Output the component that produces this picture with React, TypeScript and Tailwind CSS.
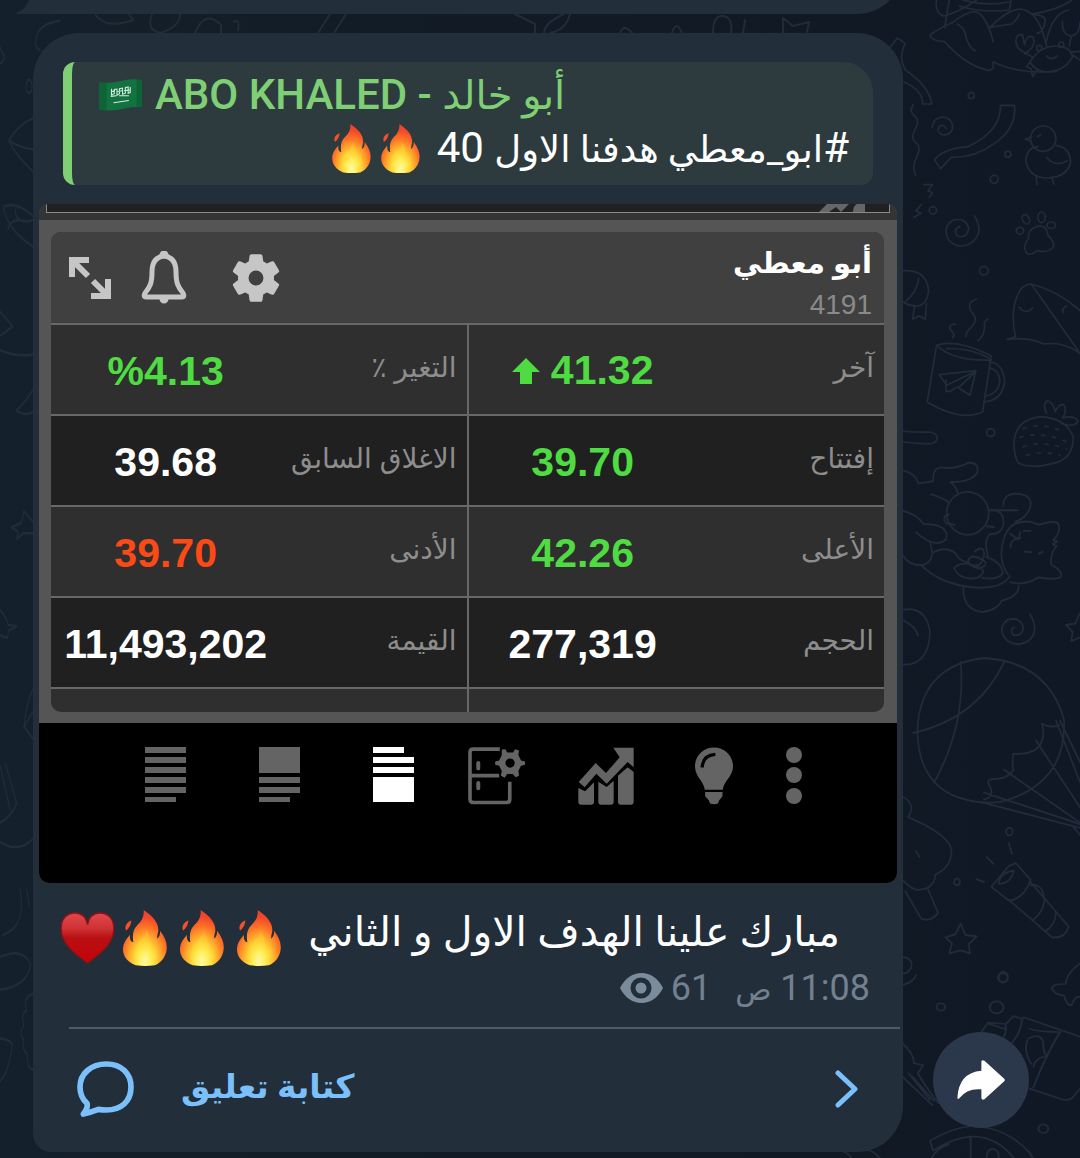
import React from 'react';

type Tone = 'up' | 'down' | 'flat';

interface Quote {
  label: string;
  value: string;
  tone: Tone;
  arrow?: boolean;
}

const quoteRows: [Quote, Quote][] = [
  [
    { label: 'آخر', value: '41.32', tone: 'up', arrow: true },
    { label: 'التغير ٪', value: '%4.13', tone: 'up' },
  ],
  [
    { label: 'إفتتاح', value: '39.70', tone: 'up' },
    { label: 'الاغلاق السابق', value: '39.68', tone: 'flat' },
  ],
  [
    { label: 'الأعلى', value: '42.26', tone: 'up' },
    { label: 'الأدنى', value: '39.70', tone: 'down' },
  ],
  [
    { label: 'الحجم', value: '277,319', tone: 'flat' },
    { label: 'القيمة', value: '11,493,202', tone: 'flat' },
  ],
];

const toneClass: Record<Tone, string> = {
  up: 'text-[#4fdc43]',
  down: 'text-[#fc4a17]',
  flat: 'text-white',
};

const GEAR =
  'M19.14 12.94c.04-.3.06-.61.06-.94 0-.32-.02-.64-.07-.94l2.03-1.58c.18-.14.23-.41.12-.61l-1.92-3.32c-.12-.22-.37-.29-.59-.22l-2.39.96c-.5-.38-1.03-.7-1.62-.94l-.36-2.54c-.04-.24-.24-.41-.48-.41h-3.84c-.24 0-.43.17-.47.41l-.36 2.54c-.59.24-1.13.57-1.62.94l-2.39-.96c-.22-.08-.47 0-.59.22L2.74 8.87c-.12.21-.08.47.12.61l2.03 1.58c-.05.3-.09.63-.09.94s.02.64.07.94l-2.03 1.58c-.18.14-.23.41-.12.61l1.92 3.32c.12.22.37.29.59.22l2.39-.96c.5.38 1.03.7 1.62.94l.36 2.54c.05.24.24.41.48.41h3.84c.24 0 .44-.17.47-.41l.36-2.54c.59-.24 1.13-.56 1.62-.94l2.39.96c.22.08.47 0 .59-.22l1.92-3.32c.12-.22.07-.47-.12-.61l-2.01-1.58zM12 15.4c-1.88 0-3.4-1.52-3.4-3.4s1.52-3.4 3.4-3.4 3.4 1.52 3.4 3.4-1.52 3.4-3.4 3.4z';

const Wallpaper: React.FC = () => (
  <svg
    className="absolute inset-0 h-full w-full"
    viewBox="0 0 1080 1158"
    preserveAspectRatio="xMidYMid slice"
    fill="none"
    stroke="#212c3a"
    strokeWidth="2"
    strokeLinecap="round"
    strokeLinejoin="round"
    aria-hidden="true"
  >
    {/* right side, upper half */}
    <g transform="scale(.3333) translate(2640 0)" strokeWidth="5">
      <path d="M170 0q-6 36 20 48q40-8 100-48M208 0l-14 84M238 18q70 22 150 12l6-30M248 0q70 20 140 6M576 0q-40 30-120 42M566 30q-50 10-68 100" />
      <path d="M150 105q34-24 66-36q60-48 84-28q26 26 40 84M150 105q4 18 44 20q66 74 132 86q20-2 12-22M232 72q26 14 26 40q12 36 28 40M330 82q70-70 110-50q40 16 60 106M340 186q80 38 190 28M330 82l66-10q20-18 22-30M456 44q40 0 40 18q-4 34-24 38" />
      <path d="M450 186q30-48 80-48q40 0 48 32q-20 42-78 46q-34-2-50-30zM500 168q14 16 32 0M456 170l-24-14q-24-10-24-34q0-20 20-18l6 30q8-34 26-22q10 28-26 50M548 64q-4 38 24 44q28-4 28-40M574 108l-6 30M450 186l-10 14l14 6l4 24l14-20M576 156l24-2M580 166l20 14" />
      <circle cx="478" cy="144" r="8" />
      <circle cx="544" cy="134" r="8" />
      <path d="M32 140l20-26l24 16q-22 40 0 80q70 46 80 102l-28 0q2-40-56-66" />
      <path d="M100 314q-14 20 4 34t2 40t2 40t2 44t-2 54" />
      <path d="M156 382q6-34 40-30q24 8 22 34q-8 22-32 18q-18-10-8-24q14-10 20 6" />
      <path d="M362 316h42q6 70-60 114q-60 44-130 42l-32 34l-18-26q24-34 100-40q98-44 98-124z" />
      <circle cx="490" cy="416" r="38" />
      <path d="M452 412l-16 6l18 6M474 440q-36 4-36 44q10 50 66 50q60-4 68-48q-2-44-44-50M500 472q26 32 62 10M468 532l4 22M516 534l6 18M474 410l8-6" />
      <path d="M132 554l26 0l-14 18l14 6l-10 14M124 614l-16 18l16 8l-22 12" />
      <path d="M284 648q28 46-4 76q-42 30-74-4q-20-40 14-60q40-8 46 26q-4 30-34 22q-14-20 8-28" />
      <path d="M470 680q30-8 34 26q22 20 16 36q-16 18-48 10q-32 26-38-10q4-20 12-26q-4-28 24-36z" />
      <ellipse cx="438" cy="658" rx="10" ry="15" transform="rotate(-30 438 658)" />
      <ellipse cx="485" cy="652" rx="11" ry="16" />
      <ellipse cx="420" cy="692" rx="11" ry="10" />
      <ellipse cx="514" cy="676" rx="13" ry="10" />
      <path d="M70 812q70-4 76 60q-4 40-30 46q-30 0-46-12M116 836q-4 40-40 70M104 920l-6 38l20-10l18 10l4-48" />
      <path d="M290 898q-34 10-14 40q22 20-4 46q-14 12-14 26M226 972q-24 2-14 18q16 12 6 24M324 958q-14 4-10 24q-2 28-20 40" />
      <path d="M170 1036q60-20 164 32l-26 168q-66 30-166-30l28-170zM170 1036q50 48 164 44M200 1046q70-4 130 30M330 1086q40 4 44 60q-6 54-60 60M328 1104q30 4 32 42q-6 36-42 42" />
      <path d="M178 1124l110-12l-18 74l-34-22l52-50l-88 42zM198 1140v34h14l20-14" />
      <path d="M382 1018q30-8 24-10q-18-90 18-142q10-12 30-14q70 100 142 202M382 1018q60-8 110 14q60-8 108 28M454 852q80 20 146 80M418 922q20 24 40 2M560 918q-16 8-10 20" />
      <circle cx="274" cy="287" r="9" />
      <circle cx="384" cy="463" r="9" />
      <circle cx="343" cy="538" r="12" />
      <circle cx="159" cy="631" r="11" />
      <circle cx="312" cy="812" r="13" />
      <circle cx="332" cy="1298" r="12" />
      <path d="M70 1294q50 4 80 2q22 4 22 18t-22 18q-40-2-80-6" />
      <path d="M402 1340q-2-80 80-90q80 6 98 62q0 60-50 76q-80 22-116 0q-10-20-12-48zM500 1240q-14-30 4-38q18 10 22 34q12-26 26-22q10 20-4 40q36-10 46 10q-10 20-50 6" />
      <path strokeDasharray="9 24" d="M430 1286q60-20 120 10M420 1312q70-20 140 14M430 1340q60-20 130 8M440 1366q50-14 100 0" />
    </g>

    {/* right side, middle */}
    <g transform="translate(880 400) scale(.3333 .3827)" strokeWidth="5">
      <path d="M70 184q40 10 44 34l46-6q-4-34 24-36q40 6 80-12q34-2 28 26q-20 26-80 24q18 14 22 32M152 246q40 10 54 22" />
      <ellipse cx="263" cy="296" rx="63" ry="56" />
      <path d="M206 300q-22 4-8 22l26 4M70 290q44 10 60 34q80 0 68 40q-30 26-90-18M150 372q20 50-24 60q-40 0-56-24M156 400q40-20 70 0q10 20 42 26M126 434q60 50 160 56q80 4 104-30M250 490q-2 60 60 64q44-6 56-30q50-10 50-38M222 440q20-20 60-8q50 14 10 32q-50 10-70-24M318 330l24 2M326 288q50-4 44 40q-10 24-40 22q-20 16-6 60M330 288h84M370 276q0-36 50-30q40 6 30 36q-10 26-44 36" />
      <path d="M384 456q-34-40-10-100q20-44 76-38l28 8q40-12 56-4q12 20-14 44l12 4l-14 6l12 6q-20 16-16 48q40 20 26 34q-20 6-66 0q-40 22-84 12M390 350l26 14l4-18M392 384q-2-20 30-24M430 342h22M434 396l20 2M476 402l12-6" />
      <path d="M264 420q10-20 40-4q30 14-8 24q-30-4-32-20zM284 396q30-20 28 10q-6 30-30 26M318 410q50 14 50 44q-20 18-62 10" />
      <path d="M450 560q28 40 0 66q-40 24-72 0q-28-30 6-52q40-8 46 22q-4 22-30 18q-12-14 2-20" />
      <path d="M600 556l-14 28l-28 4l20 18l-4 24l26-10" />
      <path d="M70 548q70-10 80 60q-4 84-80 84M70 576q40 18 44 40" />
      <path d="M256 1044q-140-30-144-180q8-170 200-190q190 10 240 160q10 170-190 216q-60 6-106-6zM242 684q16 160-76 310M374 682q-80 150-274 188M312 1044q30-6 20-30q-16-20 4-24q40 4 64-22q-4-30 0-44q50 4 74-16q24-24 12-62q24 12 52 4M312 1026l288 82M372 966l228 138M468 890l132 174M528 838l72 160M540 838l60 108M300 1050l300 68M576 1112l24 24" />
      <path d="M70 1038q40 20 14 52q120 44 130 84q4 44-48 66q-2 40-56 40q-20-4-40-24M108 1178l10 16M76 1284l48 72q30 8 50-16l-32-66" />
      <path d="M334 1272l52-54l22-8l44 44q-20 50-66 54zM356 1264q4-30 46-34q-10 34-46 34zM386 1306l130 98q40 4 50-28l-116-118M452 1268q36-6 40 34M460 1358q30-20 34-54M496 1388q30-14 32-48M386 1158l10 28M320 1194l20 18M290 1252l22 8" />
      <path d="M242 1368l14 30l34 4l-24 20l4 24l-28-8l-34 8l8-26l-20-16l30-8z" />
      <path d="M70 1456q30 4 24 26q-10 18-24 16M108 1502q-8 20-38 26" />
      <circle cx="388" cy="1128" r="10" />
      <circle cx="231" cy="1259" r="9" />
      <circle cx="370" cy="1508" r="14" />
    </g>

    {/* lower right corner */}
    <g transform="translate(480 890) scale(.3827 .3333)" strokeWidth="5">
      <path d="M1568 220q-34 26-38 62q-40 0-34 16q6 18 30 18q6 30 20 30q6-26 22-26" />
      <path d="M1310 426l18-28l46 4l20-24l24 10M1330 402l44 16M1372 402q10 30-20 60M1416 384q0 50-40 90M1420 382l148 58M1436 416q26 10 80 10q-34 60-70 166M1430 452q-10 30 10 70M1432 446q30-20 40 10q-2 30 10 44q-30 0-36 30M1436 596l90 34q20 0 24-10l18-24" />
      <path d="M1104 460q30 30 30 60l24 6l-14 24q20 40 54 90M1104 560l78 86M1120 550l56 80M1130 560l56 72" />
      <path d="M1176 752q60-40 110-44q90 4 150 80l8 16M1176 752l8 30q60-44 110-42q60 4 100 64M1282 740v64M1324 800q0-22 18-24q18 10 12 28M1180 804q14-30 44-40M920 780q40 0 50 24M1000 776q30 6 44 28" />
      <circle cx="1204" cy="351" r="11" />
      <circle cx="1366" cy="263" r="13" />
      <circle cx="1472" cy="716" r="13" />
      <circle cx="1350" cy="352" r="18" />
    </g>

    {/* left edge and the strip between the bubbles */}
    <g transform="scale(.3333 .7385)" strokeWidth="3.5">
      <path d="M180 28q-60 4-70 20t10 20M0 64q10 12 12 10q4 8-12 12M98 160q-40 8-72 30q20 20 72 42M26 190q30 10 72 12M10 280q40-8 88 12M10 280q10 30 88 54M46 284q0 10 14 14q-30 0-36 12M60 298q20 4 38 0M0 422l38 20l-36 12M0 474q50 10 98 6M98 528q-20 16-50 28q30 8 50 2M98 706l-26-14l-8 16l-30 6l20 6l-4 10l20-8h28M0 826q20 10 24 20l26 2l-24 6l-4 10l-22-4M98 934q-20 20-26 50l26 16M72 984l26-20" />
      <path d="M0 1036l30 60M16 1034l34 54M50 1088q-20 20-50 26M0 1140q60 16 98-4M60 1204q20 50-50 62M80 1204l8 22M0 1296q70-14 92 10q-10 30-92 34M0 1406q40 2 36 12q-10 34-36 46M98 1346q-30 4-18 22q-20 6-8 20q-18 12 0 20q-10 10 10 20q0 20 16 20" />
      <circle cx="87" cy="117" r="9" />
    </g>
    <path d="M95 14q10 16 38 6l-4-6M152 14q-6 16 8 19q20-6 20-19M195 33q10-24 26-8v8M234 22q6-4 4 8M330 14l-12 19M346 14l-12 19M515 14l20 10v9M544 33q0-10 20-19M570 14q-4 16-20 19M620 33q4-10 12 0M672 33q4-14 10 0M713 33q0-18 10-17t8 17M745 20l-2 13M783 33v-15l10 8l16-4l-2 10" />
  </svg>
);

// gradients shared by every emoji drawing
const EmojiDefs: React.FC = () => (
  <svg className="absolute h-0 w-0" aria-hidden="true">
    <defs>
      <radialGradient id="flame" gradientUnits="userSpaceOnUse" cx="66" cy="150" r="150" gradientTransform="translate(66 150) scale(.66 1) translate(-66 -150)">
        <stop offset="0" stopColor="#fffdd0" />
        <stop offset=".16" stopColor="#fff56a" />
        <stop offset=".34" stopColor="#ffd335" />
        <stop offset=".5" stopColor="#ffa52b" />
        <stop offset=".66" stopColor="#fd7526" />
        <stop offset=".85" stopColor="#f4482a" />
        <stop offset="1" stopColor="#ee3f2c" />
      </radialGradient>
      <linearGradient id="heart" x1="0" y1="0" x2="0" y2="1">
        <stop offset="0" stopColor="#e0474b" />
        <stop offset=".3" stopColor="#d03336" />
        <stop offset=".5" stopColor="#b90f13" />
        <stop offset="1" stopColor="#c20407" />
      </linearGradient>
    </defs>
  </svg>
);

const Flame: React.FC<{ className: string }> = ({ className }) => (
  <svg className={className} viewBox="0 0 132 168" role="img" aria-label="fire">
    <path
      fill="url(#flame)"
      d="M62 0C88 18 106 36 106 60C106 70 101 76 103 86C109 80 112 72 111 62C127 82 133 100 131 118C129 138 118 156 96 166Q66 170 38 166C14 156 1 140 0 120C-1 102 8 88 21 74C19 87 23 95 31 97C27 72 31 57 44 44C57 32 64 17 62 0Z"
    />
    <path fill="#f4502b" d="M25 31C10 39 4 48 9 62C19 54 25 44 25 31Z" />
    <path
      fill="#ffe23c"
      opacity=".25"
      d="M70 62C66 84 46 92 38 110C32 130 40 156 66 162C94 158 108 140 100 114C94 122 90 126 84 124C86 100 84 78 70 62Z"
    />
  </svg>
);

const Heart: React.FC = () => (
  <svg className="h-[52px] w-[55px]" viewBox="0 0 164 156" role="img" aria-label="heart">
    <path
      fill="url(#heart)"
      stroke="#8f1216"
      strokeWidth="4"
      d="M82 153C48 128 3 96 3 50C3 20 20 3 45 3C64 3 77 14 82 38C87 14 100 3 119 3C144 3 161 20 161 50C161 96 116 128 82 153Z"
    />
  </svg>
);

const Flag: React.FC = () => (
  <svg className="h-8 w-[45px]" viewBox="0 0 128 92" role="img" aria-label="Saudi Arabia">
    <path fill="#127341" d="M2 9Q34 14 64 6T126 3V80Q96 80 64 87T2 88Z" />
    <path fill="#0b5a30" d="M2 9Q14 11 24 11V90Q12 91 2 88ZM110 1Q118 1 126 3V80Q118 79 110 80Z" opacity=".6" />
    <path fill="none" stroke="#d8ebe0" strokeWidth="3" d="M38 28v18l8-4V30l8-1v18l7-5V28l9-2v18l8-3V25l8-2v18l6-2V23M38 36l10-2M56 36l12-2M74 34l16-2M36 50l16-2M60 48h28M44 68l44-6" />
  </svg>
);

const stackBars = {
  lines: 'M0 0h41v6H0zM0 10h41v6H0zM0 20h41v6H0zM0 30h41v6H0zM0 40h41v6H0zM0 50h31v5H0z',
  top: 'M0 0h41v26H0zM0 30h41v6H0zM0 40h41v6H0zM0 50h31v5H0z',
  bottom: 'M0 0h31v6H0zM0 10h41v6H0zM0 20h41v6H0zM0 30h41v25H0z',
};

const ToolBar: React.FC = () => (
  <div className="flex h-40 items-start justify-center gap-[53px] bg-black pt-6 pl-3 text-[#646464]">
    <button type="button" className="mr-[19px]" aria-label="List">
      <svg className="h-[55px] w-[42px]" viewBox="0 0 42 55" fill="currentColor"><path d={stackBars.lines} /></svg>
    </button>
    <button type="button" className="mr-[19px]" aria-label="Header and list">
      <svg className="h-[55px] w-[42px]" viewBox="0 0 42 55" fill="currentColor"><path d={stackBars.top} /></svg>
    </button>
    <button type="button" className="text-white" aria-label="List and details">
      <svg className="h-[55px] w-[42px]" viewBox="0 0 42 55" fill="currentColor"><path d={stackBars.bottom} /></svg>
    </button>
    <button type="button" aria-label="Layout settings">
      <svg className="h-[58px] w-[57px]" viewBox="82 74 172 174" fill="none" stroke="currentColor" strokeWidth="11">
        <path d="M178 80H98Q88 80 88 90V231Q88 241 98 241H198Q208 241 208 231V178M87 160H176" />
        <path d="M113 122v16M113 182v16" strokeWidth="12" strokeLinecap="round" />
        <path
          fill="currentColor"
          stroke="none"
          fillRule="evenodd"
          d="M184 81L195 80L200 90H218L224 80L236 84L234 98L242 114L254 117V127L242 130L234 146L236 160L226 165L217 155H200L193 166L181 160L184 146L176 130L164 127V117L176 114L184 98ZM209 108A14 14 0 1 0 209 136A14 14 0 1 0 209 108Z"
        />
      </svg>
    </button>
    <button type="button" aria-label="Chart">
      <svg className="h-[58px] w-[56px]" viewBox="413 77 168 174" fill="currentColor">
        <path d="M415 182L466 125L497 155L538 108L519 79H580V138L562 122L499 187L468 157L433 198Z" />
        <path d="M414 200L434 210L461 183V243Q461 250 454 250H421Q414 250 414 243ZM474 181L499 197L520 178V243Q520 250 513 250H481Q474 250 474 243ZM533 163L562 138L580 152V243Q580 250 573 250H540Q533 250 533 243Z" />
      </svg>
    </button>
    <button type="button" className="ml-2" aria-label="Ideas">
      <svg className="h-[58px] w-[38px]" viewBox="764 77 116 174" fill="currentColor">
        <path d="M822 77C855 77 880 102 880 134C880 166 852 178 849 206H794C790 178 764 166 764 134C764 102 789 77 822 77ZM795 213H848V226L838 238L834 248Q822 252 810 248L806 238L795 226Z" />
        <path d="M786 138Q788 100 826 98" fill="none" stroke="#000" strokeWidth="10" />
      </svg>
    </button>
    <button type="button" aria-label="More">
      <svg className="h-[57px] w-[17px]" viewBox="0 0 17 57" fill="currentColor">
        <circle cx="8" cy="8" r="8" />
        <circle cx="8" cy="28" r="8" />
        <circle cx="8" cy="49" r="8" />
      </svg>
    </button>
  </div>
);

const QuoteCells: React.FC<{ quote: Quote; divided: boolean }> = ({ quote, divided }) => (
  <>
    <th scope="row" className="pr-[10px] pb-1 text-right text-[28px] font-normal whitespace-nowrap text-[#8d8d8d]">
      {quote.label}
    </th>
    <td className={`pt-1 pr-1 text-center text-[41px] font-bold ${toneClass[quote.tone]} ${divided ? 'border-l-2 border-[#686868]' : ''}`}>
      <span dir="ltr" className="inline-flex items-center gap-[11px]">
        {quote.arrow && (
          <svg className="h-7 w-7" viewBox="0 0 28 28" fill="currentColor" aria-hidden="true">
            <path d="M14 1L28 15H20V27H8V15H0Z" />
          </svg>
        )}
        {quote.value}
      </span>
    </td>
  </>
);

const StockPhoto: React.FC = () => (
  <div className="mx-[6px] overflow-hidden rounded-[10px] bg-[#555] font-['Liberation_Sans','DejaVu_Sans',sans-serif]">
    {/* bottom edge of the scrolled chart */}
    <div className="h-4 bg-[#343434] px-[7px]">
      <div className="flex h-[9px] justify-end border-x border-b border-[#8a8a8a] bg-[#212121] pr-6">
        <svg className="h-2 w-[46px]" viewBox="0 0 46 8" fill="#666">
          <path d="M0 8L8 0H30L22 8L17 3L10 8ZM34 8Q34 2 38 0H46V8Z" />
        </svg>
      </div>
    </div>

    <div className="mt-3 mr-[13px] mb-[11px] ml-3 overflow-hidden rounded-[10px] bg-[#2f2f2f]">
      <div className="flex h-[91px] items-start justify-between bg-[#404040] pt-[19px] pr-3 pl-[18px] text-[#c6c6c6]">
        <div className="flex items-center">
          <button type="button" aria-label="Expand">
            <svg className="h-[42px] w-[42px]" viewBox="0 0 42 42" fill="none" stroke="currentColor" strokeWidth="6">
              <path d="M3 20V3H20M4 4L19 19M39 22V39H22M38 38L24 24" />
            </svg>
          </button>
          <button type="button" className="ml-[30px]" aria-label="Alerts">
            <svg className="h-[53px] w-[46px]" viewBox="0 0 46 53" fill="none" stroke="currentColor" strokeWidth="5" strokeLinejoin="round">
              <path d="M23 5C14 6 11 13 11 21C11 32 9 36 4 42Q2 46 5 46H41Q44 46 42 42C37 36 35 32 35 21C35 13 32 6 23 5Z" />
              <path d="M21 4a2 2 0 0 1 4 0M21 48a2 2 0 0 0 4 0Z" fill="currentColor" />
            </svg>
          </button>
          <button type="button" className="ml-[45px]" aria-label="Settings">
            <svg className="h-12 w-12" viewBox="2 2 20 20" fill="currentColor" stroke="currentColor" strokeWidth=".6"><path d={GEAR} /></svg>
          </button>
        </div>
        <div dir="rtl">
          <h2 className="-mt-2 text-[29px] leading-10 font-bold text-white">أبو معطي</h2>
          <p className="mt-[6px] text-[28px] leading-8 text-[#8a8a8a]">4191</p>
        </div>
      </div>

      <table dir="rtl" className="w-full table-fixed border-collapse">
        <colgroup>
          <col className="w-[22%]" />
          <col className="w-[28%]" />
          <col className="w-[22%]" />
          <col className="w-[28%]" />
        </colgroup>
        <tbody>
          {quoteRows.map((row, i) => (
            <tr key={row[0].label} className={`h-[91px] border-t-2 border-[#686868] ${i % 2 ? 'bg-[#202020]' : 'bg-[#2f2f2f]'}`}>
              <QuoteCells quote={row[0]} divided />
              <QuoteCells quote={row[1]} divided={false} />
            </tr>
          ))}
          <tr className="h-6 border-t-2 border-[#686868]">
            <td colSpan={2} className="border-l-2 border-[#686868]" />
            <td colSpan={2} />
          </tr>
        </tbody>
      </table>
    </div>

    <ToolBar />
  </div>
);

const App: React.FC = () => {
  return (
    <div className="relative min-h-screen overflow-hidden bg-linear-to-r from-[#14202b] via-[#111a25] to-[#111825] font-[Roboto,'DejaVu_Sans',sans-serif]">
      <Wallpaper />
      <EmojiDefs />

      <main className="relative">
        {/* previous message */}
        <div className="mr-[177px] ml-4 flex h-[14px] items-end">
          <svg className="h-[14px] w-[18px]" viewBox="0 0 18 14" fill="#222e3a" aria-hidden="true">
            <path d="M0 13Q10 9 13 0H18V14H1Z" />
          </svg>
          <div className="h-12 flex-1 rounded-br-[46px] bg-[#222e3a]" />
        </div>

        <div className="mt-[19px] mr-[51px] ml-[33px] flex items-end">
          <article className="min-w-0 flex-1 rounded-t-[46px] rounded-br-[46px] rounded-bl-[18px] bg-[#222e3a] pt-[29px]">
            <blockquote className="mx-[30px] mb-[19px] h-[123px] overflow-hidden rounded-l-[12px] rounded-tr-[30px] rounded-br-[12px] border-l-[9px] border-[#7fd074] bg-[#2d3b3e] pr-6 pl-[26px]">
              <p dir="ltr" className="flex h-[66px] items-center gap-3 text-[42px] leading-none font-medium whitespace-nowrap text-[#7fd074]">
                <Flag />
                <span>
                  ABO KHALED - <bdi className="text-[40px]">أبو خالد</bdi>
                </span>
              </p>
              <p dir="rtl" className="flex h-10 items-center text-[42px] leading-none whitespace-nowrap text-white">
                <span>
                  #<span className="text-[37px]">ابو_معطي هدفنا الاول</span> 40
                </span>
                <Flame className="mr-[17px] h-[49px] w-[39px]" />
                <Flame className="mr-[10px] h-[49px] w-[39px]" />
              </p>
            </blockquote>

            <StockPhoto />

            <p dir="rtl" className="flex h-[84px] items-center pt-[26px] pr-[63px] text-[41px] leading-none whitespace-nowrap text-white">
              <span className="ml-[27px] pb-3">مبارك علينا الهدف الاول و الثاني</span>
              <Flame className="ml-[13px] h-14 w-11" />
              <Flame className="ml-[13px] h-14 w-11" />
              <Flame className="ml-2 h-14 w-11" />
              <Heart />
            </p>

            <div dir="rtl" className="flex h-[42px] items-center pr-[33px] text-[36px] text-[#72808f]">
              <time>
                11:08 <span className="text-[30px]">ص</span>
              </time>
              <span className="mr-6 ml-2">61</span>
              <svg className="h-[30px] w-[43px]" viewBox="0 0 43 30" fill="none" role="img" aria-label="Views">
                <path fill="#7a8b9c" d="M0 15C5 5 13 0 21.500 0S38 5 43 15C38 25 30 30 21.500 30S5 25 0 15Z" />
                <circle cx="21" cy="15" r="8" stroke="#222e3a" strokeWidth="5" />
              </svg>
            </div>

            <button type="button" className="mt-[18px] block h-[125px] w-full pr-[3px] pl-9 text-[#7bc0fb]">
              <span className="flex h-full items-start border-t-2 border-[#4d5a67] pt-8 pr-[42px] pl-2">
                <svg className="h-[56px] w-[57px]" viewBox="0 0 171 168" fill="none" stroke="currentColor" strokeWidth="17" strokeLinejoin="round">
                  <path d="M88 9C134 9 162 38 162 78C162 120 134 147 88 147Q76 147 64 145Q44 153 19 159Q34 140 30 127C15 114 9 98 9 78C9 38 42 9 88 9Z" />
                </svg>
                <span dir="rtl" className="ml-[47px] text-[33px] leading-[52px] font-bold">كتابة تعليق</span>
                <svg className="mt-[9px] ml-auto h-[38px] w-[23px]" viewBox="0 0 23 38" fill="none" stroke="currentColor" strokeWidth="5" strokeLinecap="round" strokeLinejoin="round">
                  <path d="M3 3L20 19L3 35" />
                </svg>
              </span>
            </button>
          </article>

          <button
            type="button"
            className="mb-6 ml-[30px] flex h-24 w-24 shrink-0 items-center justify-center rounded-full bg-[#2b374b]"
            aria-label="Forward"
          >
            <svg className="h-10 w-12" viewBox="0 0 126 120" preserveAspectRatio="none" fill="#fff">
              <path d="M64 4Q66-2 72 2L124 56Q127 60 124 64L72 118Q66 122 64 115V88Q26 84 6 115Q2 120 1 114Q4 38 64 32Z" />
            </svg>
          </button>
        </div>
      </main>
    </div>
  );
};

export default App;
